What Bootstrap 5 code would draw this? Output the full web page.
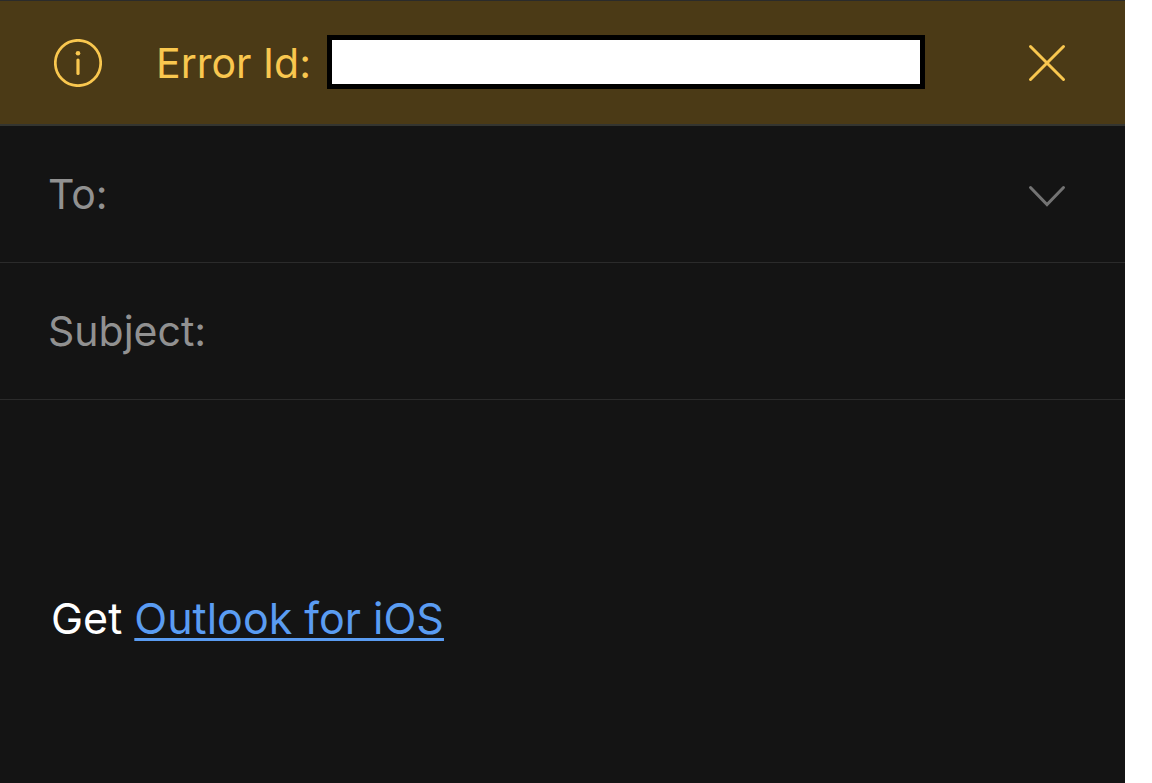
<!DOCTYPE html>
<html lang="en">
<head>
<meta charset="utf-8">
<meta name="viewport" content="width=device-width, initial-scale=1">
<title>New message</title>
<link href="https://cdn.jsdelivr.net/npm/bootstrap@5.3.0/dist/css/bootstrap.min.css" rel="stylesheet">
<style>
  body { background: #fff; font-family: Inter, "Liberation Sans", sans-serif; font-size: 41px; line-height: 56px; padding-right: 27px; }
  .composer { background: #141414; color: #919191; }
  .notice { background: #4b3a16; color: #f9c74f; border-top: 1px solid #2b2b2b; border-bottom: 2px solid #343530; padding: 34px 54px 33px; }
  .notice-text { margin-left: 54px; }
  .error-id { width: 598px; height: 54px; border: 5px solid #000; border-radius: 0; background: #fff; color: #000; padding: 0 8px; font-size: 32px; }
  .header-row { border-bottom: 1px solid #2b2b2b; padding: 40px 54px 40px 48px; }
  .header-row input { color: #fff; outline: 0; height: 56px; }
  .bare-btn { color: inherit; line-height: 0; }
  .message { color: #fff; font-size: 43px; padding: 190px 51px 48px; }
  .message a { color: #5a9cf2; text-decoration-thickness: 3px; text-decoration-skip-ink: none; text-underline-offset: 4px; }
</style>
</head>
<body>
<main class="composer min-vh-100 d-flex flex-column">
  <div class="notice d-flex align-items-center" role="status">
    <svg class="flex-shrink-0" width="48" height="48" viewBox="0 0 48 48" fill="none" stroke="currentColor" aria-hidden="true">
      <circle cx="24" cy="24" r="22.7" stroke-width="2.7"/>
      <path d="M24 21v13.500" stroke-width="3.200" stroke-linecap="round"/>
      <circle cx="24" cy="14.200" r="2.300" fill="currentColor" stroke="none"/>
    </svg>
    <label class="notice-text flex-shrink-0 me-3" for="errorId">Error Id:</label>
    <input class="error-id align-self-start" id="errorId" type="text" readonly>
    <button class="btn bare-btn border-0 p-0 ms-auto" type="button" aria-label="Dismiss">
      <svg width="48" height="48" viewBox="0 0 48 48" fill="none" stroke="currentColor" stroke-width="3" stroke-linecap="round" aria-hidden="true"><path d="M7.500 7.500l33 33M40.500 7.500l-33 33"/></svg>
    </button>
  </div>
  <form>
    <div class="header-row d-flex align-items-center">
      <label for="to">To:</label>
      <input class="flex-grow-1 border-0 bg-transparent p-0 ms-3" id="to" type="email">
      <button class="btn bare-btn border-0 p-0" type="button" aria-label="Show Cc and Bcc">
        <svg width="48" height="48" viewBox="0 0 48 48" fill="none" stroke="#737373" stroke-width="3" stroke-linecap="round" aria-hidden="true"><path d="M7.500 17.500L24 34.500l16.500-17"/></svg>
      </button>
    </div>
    <div class="header-row d-flex align-items-center">
      <label for="subject">Subject:</label>
      <input class="flex-grow-1 border-0 bg-transparent p-0 ms-3" id="subject" type="text">
    </div>
  </form>
  <div class="message">Get <a href="#">Outlook for iOS</a></div>
</main>
<script src="https://cdn.jsdelivr.net/npm/bootstrap@5.3.0/dist/js/bootstrap.bundle.min.js"></script>
</body>
</html>
